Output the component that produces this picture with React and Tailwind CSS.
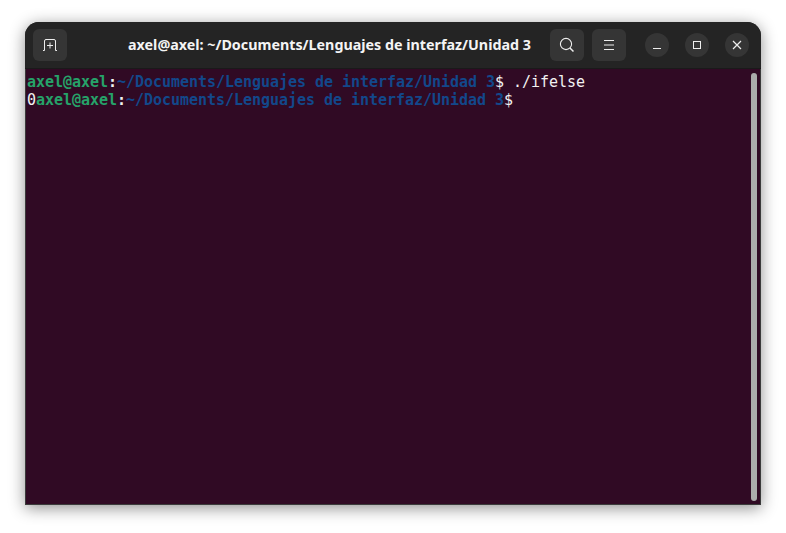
export default function App() {
  const green = "text-[#26a269] font-bold";
  const blue = "text-[#12488b] font-bold";
  const Path = () => (
    <>
      <span className={green}>axel@axel</span>
      <span className="font-bold">:</span>
      <span className={blue}>~/Documents/Lenguajes de interfaz/Unidad 3</span>
      <span>$</span>
    </>
  );
  const btn = "w-[34px] h-[32px] rounded-[6px] bg-[#353535] flex items-center justify-center";
  const round = "w-[24px] h-[24px] rounded-full bg-[#353535] flex items-center justify-center";
  return (
    <div className="w-[786px] h-[533px] bg-white pt-[22px] pl-[25px] overflow-hidden">
      <div className="w-[736px] h-[483px] flex flex-col rounded-t-[14px] overflow-hidden bg-[#222222] shadow-[0_3px_16px_rgba(0,0,0,0.45)]">
        <div className="h-[47px] shrink-0 flex items-center bg-[#242424] pl-[8px] pr-[12px] border-b border-[#1a1a1a]">
          <div className={btn}>
            <svg width="16" height="16" viewBox="0 0 16 16" fill="none" stroke="#eeeeee" strokeWidth="1">
              <path d="M1 13.5H2.5V4Q2.5 2.5 4 2.5H12Q13.5 2.5 13.5 4V13.5H15" />
              <path d="M8 5.5V11.5M5 8.5H11" />
            </svg>
          </div>
          <div className="flex-1 text-center text-[#f4f4f4] text-[14.3px] font-bold font-['Noto_Sans',sans-serif] whitespace-nowrap pl-[42px]">
            axel@axel: ~/Documents/Lenguajes de interfaz/Unidad 3
          </div>
          <div className="flex items-center gap-[8px]">
            <div className={btn}>
              <svg width="16" height="16" viewBox="0 0 16 16" fill="none" stroke="#eeeeee" strokeWidth="1.1">
                <circle cx="7" cy="7" r="5.6" />
                <path d="M11 11L14.5 14.5" strokeWidth="1.5" />
              </svg>
            </div>
            <div className={btn}>
              <svg width="16" height="16" viewBox="0 0 16 16" fill="none" stroke="#eeeeee" strokeWidth="1">
                <path d="M3 3.5H13M3 8H13M3 12.5H13" />
              </svg>
            </div>
          </div>
          <div className="flex items-center gap-[16px] ml-[19px]">
            <div className={round}>
              <div className="w-[8px] h-[1px] bg-[#eeeeee] mt-[6px]" />
            </div>
            <div className={round}>
              <div className="w-[8px] h-[8px] border border-[#eeeeee]" />
            </div>
            <div className={round}>
              <svg width="10" height="10" viewBox="0 0 10 10" fill="none" stroke="#eeeeee" strokeWidth="1.2">
                <path d="M1 1L9 9M9 1L1 9" />
              </svg>
            </div>
          </div>
        </div>
        <div className="flex-1 flex bg-[#300a24] border-x border-b border-[#3a3a3a] min-h-0">
          <div className="flex-1 pl-[1px] pt-[4px] font-['DejaVu_Sans_Mono',monospace] text-[15px] leading-[18px] tracking-[-0.03px] text-[#f2f2f2] whitespace-pre">
            <div><Path /> ./ifelse</div>
            <div>0<Path /></div>
          </div>
          <div className="w-[6px] mr-[3px] mt-[4px] mb-[3px] rounded-full bg-[#ababab]" />
        </div>
      </div>
    </div>
  );
}
